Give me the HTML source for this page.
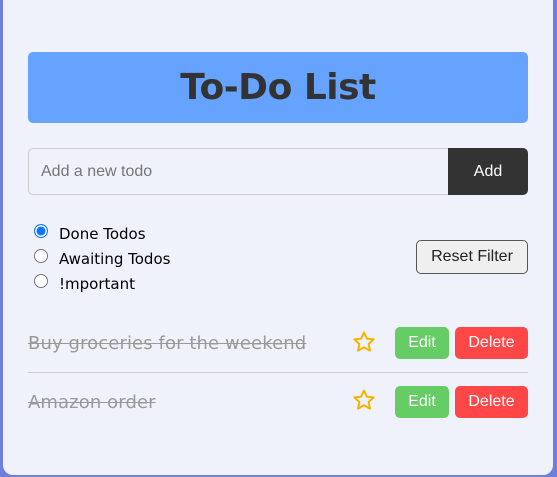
<!DOCTYPE html>
<html><head><style>
body{margin:0;width:557px;height:477px;background:#6f7fdc;font-family:"Liberation Sans",sans-serif;overflow:hidden;position:relative}
.card{position:absolute;left:3px;top:-10px;width:550px;height:485px;background:#f0f2fb;border-radius:10px}
.abs{position:absolute}
h1{position:absolute;left:28px;top:52px;width:500px;height:71px;margin:0;background:#66a3ff;border-radius:5px;text-align:center;line-height:71px;font-family:"DejaVu Sans",sans-serif;font-size:36px;font-weight:bold;color:#333;letter-spacing:-0.5px}
.inp{left:28px;top:148px;border:1px solid #ccc;border-right:none;border-radius:5px 0 0 5px;font-size:16px;color:#757575;line-height:45px;padding-left:12px;box-sizing:border-box;width:420px;height:47px}
.add{left:448px;top:148px;width:80px;height:47px;background:#333;color:#fff;border-radius:0 5px 5px 0;text-align:center;line-height:47px;font-size:16px}
.r{left:34px;width:12px;height:12px;border:1px solid #767676;border-radius:50%;background:#fff}
.rl{left:59px;font-family:"DejaVu Sans",sans-serif;font-size:15px;color:#000}
.reset{left:416px;top:240px;width:110px;height:32px;border:1px solid #555;border-radius:5px;background:#efefef;text-align:center;line-height:32px;font-size:16px;color:#222}
.t{left:28px;font-family:"DejaVu Sans",sans-serif;font-size:18px;letter-spacing:0.1px;color:#999;text-decoration:line-through}
.e{left:395px;width:54px;height:32px;background:#66cc66;color:#fff;border-radius:5px;text-align:center;line-height:32px;font-size:16px}
.d{left:455px;width:73px;height:32px;background:#ff4747;color:#fff;border-radius:5px;text-align:center;line-height:32px;font-size:16px}
</style></head><body>
<div class="card"></div>
<h1>To-Do List</h1>
<div class="abs inp">Add a new todo</div>
<div class="abs add">Add</div>
<div class="abs r" style="top:224px;background:#0a75ff;border:1px solid #0a75ff;box-shadow:inset 0 0 0 1.5px #fff"></div>
<div class="abs rl" style="top:225px">Done Todos</div>
<div class="abs r" style="top:249px"></div>
<div class="abs rl" style="top:250px">Awaiting Todos</div>
<div class="abs r" style="top:274px"></div>
<div class="abs rl" style="top:275px">!mportant</div>
<div class="abs reset">Reset Filter</div>
<div class="abs t" style="top:333px">Buy groceries for the weekend</div>
<svg class="abs" style="left:352px;top:330px" width="24" height="24" viewBox="0 0 24 24"><path d="M12 2.5l2.9 6.2 6.7.7-5 4.6 1.4 6.7L12 17.3 6 20.7l1.4-6.7-5-4.6 6.7-.7z" fill="none" stroke="#f5b400" stroke-width="2" stroke-linejoin="round"/></svg>
<div class="abs e" style="top:327px">Edit</div>
<div class="abs d" style="top:327px">Delete</div>
<div class="abs" style="left:28px;top:372px;width:500px;height:1px;background:#ccc"></div>
<div class="abs t" style="top:392px">Amazon order</div>
<svg class="abs" style="left:352px;top:388px" width="24" height="24" viewBox="0 0 24 24"><path d="M12 2.5l2.9 6.2 6.7.7-5 4.6 1.4 6.7L12 17.3 6 20.7l1.4-6.7-5-4.6 6.7-.7z" fill="none" stroke="#f5b400" stroke-width="2" stroke-linejoin="round"/></svg>
<div class="abs e" style="top:386px">Edit</div>
<div class="abs d" style="top:386px">Delete</div>
</body></html>
